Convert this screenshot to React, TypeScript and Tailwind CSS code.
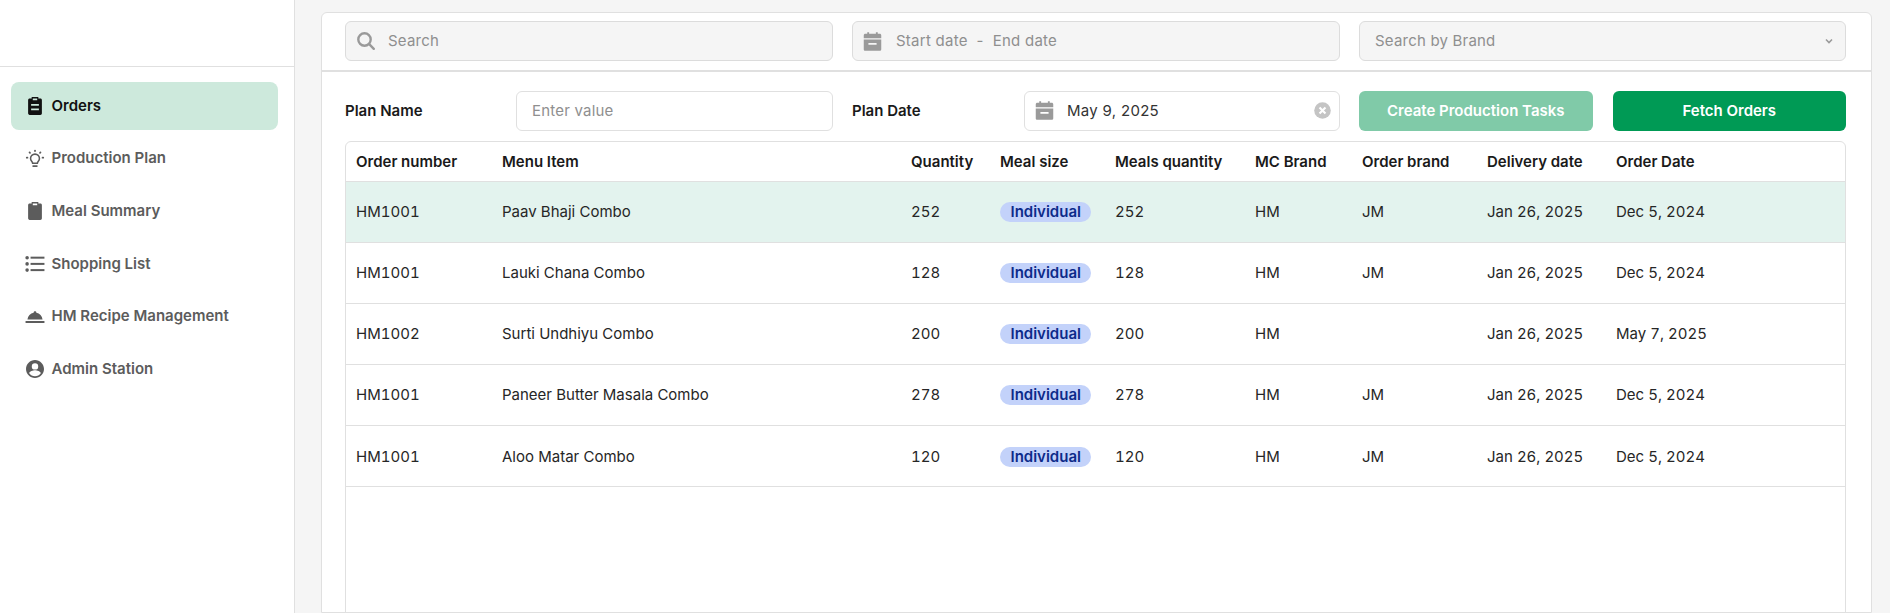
import React from "react";

const Clipboard = ({ lines }: { lines?: boolean }) => (
  <svg width="20" height="20" viewBox="0 0 18 18" fill="currentColor" fillRule="evenodd">
    <path
      d={
        "M6 1h6v1.2h1.8c.9 0 1.4.6 1.4 1.4v12c0 .9-.6 1.4-1.4 1.4H4.2c-.9 0-1.4-.6-1.4-1.4V3.6c0-.9.6-1.4 1.4-1.4H6zM7 2.3v1.6h4V2.3z" +
        (lines ? "M5.5 7.2h7v1.6h-7zM5.5 11.2h7v1.6h-7z" : "")
      }
    />
  </svg>
);
const Bulb = () => (
  <svg width="20" height="20" viewBox="0 0 18 18" fill="none" stroke="currentColor" strokeWidth="1.4" strokeLinecap="round">
    <path d="M6.9 12.8c0-1.3-1.9-2-1.9-4.2a4 4 0 0 1 8 0c0 2.2-1.9 2.9-1.9 4.2z" />
    <path d="M7.4 15.4h3.2" strokeWidth="1.7" />
    <path d="M9 1.4v.5M4.1 3l.4.4M13.9 3l-.4.4M1.6 7.8h.6M15.8 7.8h.6" strokeWidth="1.6" />
  </svg>
);
const ListIcon = () => (
  <svg width="20" height="20" viewBox="0 0 18 18" fill="currentColor">
    <circle cx="1.9" cy="3.3" r="1.6" />
    <circle cx="1.9" cy="8.9" r="1.6" />
    <circle cx="1.9" cy="14.5" r="1.6" />
    <rect x="5" y="2.4" width="12.5" height="1.8" />
    <rect x="5" y="8" width="12.5" height="1.8" />
    <rect x="5" y="13.6" width="12.5" height="1.8" />
  </svg>
);
const Bell = () => (
  <svg width="20" height="20" viewBox="0 0 18 18" fill="currentColor">
    <path d="M0.5 13.5h17v1.7H.5zM2.2 12.2c.4-3.4 2.6-5.6 5.6-6.2-.1-.8.4-1.3 1.2-1.3s1.3.5 1.2 1.3c3 .6 5.2 2.8 5.6 6.2z" />
  </svg>
);
const Account = () => (
  <svg width="18" height="18" viewBox="0 0 24 24" fill="currentColor">
    <path d="M12 0C5.4 0 0 5.4 0 12s5.4 12 12 12 12-5.4 12-12S18.6 0 12 0zm0 4.2a4.3 4.3 0 1 1 0 8.6 4.3 4.3 0 0 1 0-8.6zm0 17.4c-3.2 0-6-1.6-7.7-4 .1-2.6 5.1-3.9 7.7-3.9s7.6 1.3 7.7 3.9c-1.7 2.4-4.5 4-7.7 4z" />
  </svg>
);
const Calendar = () => (
  <svg width="21" height="21" viewBox="0 0 18 18" fill="currentColor" fillRule="evenodd">
    <path d="M4.5 1h1.6v1.4h5.8V1h1.6v1.4h1.6c.9 0 1.4.6 1.4 1.4v11.8c0 .9-.6 1.4-1.4 1.4H2.9c-.9 0-1.4-.6-1.4-1.4V3.8c0-.9.6-1.4 1.4-1.4h1.6zM1.5 6.2v1h15v-1zM5.5 10.3v1.5h7v-1.5z" />
  </svg>
);

const Nav = ({ icon, label, active }: { icon: React.ReactNode; label: string; active?: boolean }) => (
  <div
    className={
      "flex h-[48px] items-center gap-[6.5px] rounded-[8px] pl-[14px] text-[15px] font-semibold " +
      (active ? "bg-[#cde9dc] text-[#111111]" : "text-[#5c5c5c]")
    }
  >
    <span className="flex w-[20px] justify-center">{icon}</span>
    {label}
  </div>
);

const rows = [
  ["HM1001", "Paav Bhaji Combo", "252", "252", "HM", "JM", "Jan 26, 2025", "Dec 5, 2024"],
  ["HM1001", "Lauki Chana Combo", "128", "128", "HM", "JM", "Jan 26, 2025", "Dec 5, 2024"],
  ["HM1002", "Surti Undhiyu Combo", "200", "200", "HM", "", "Jan 26, 2025", "May 7, 2025"],
  ["HM1001", "Paneer Butter Masala Combo", "278", "278", "HM", "JM", "Jan 26, 2025", "Dec 5, 2024"],
  ["HM1001", "Aloo Matar Combo", "120", "120", "HM", "JM", "Jan 26, 2025", "Dec 5, 2024"],
];

const heads = ["Order number", "Menu Item", "Quantity", "Meal size", "Meals quantity", "MC Brand", "Order brand", "Delivery date", "Order Date"];
const colW = ["w-[146px]", "w-[409px]", "w-[89px]", "w-[115px]", "w-[140px]", "w-[107px]", "w-[125px]", "w-[129px]", ""];

export default function App() {
  return (
    <div className="flex h-screen overflow-hidden bg-[#f5f5f5] font-['Inter',sans-serif] text-[#1a1a1a]">
      <aside className="w-[295px] shrink-0 border-r border-[#e0e0e0] bg-white">
        <div className="h-[67px] border-b border-[#e0e0e0]" />
        <nav className="flex flex-col gap-[4.6px] pl-[11px] pr-[16px] pt-[15px]">
          <Nav active icon={<Clipboard lines />} label="Orders" />
          <Nav icon={<Bulb />} label="Production Plan" />
          <Nav icon={<Clipboard />} label="Meal Summary" />
          <Nav icon={<ListIcon />} label="Shopping List" />
          <Nav icon={<Bell />} label="HM Recipe Management" />
          <Nav icon={<Account />} label="Admin Station" />
        </nav>
      </aside>

      <main className="min-w-0 flex-1 pl-[26px] pr-[18px] pt-[11.5px]">
        <div className="h-full rounded-t-[6px] border border-[#e0e0e0] bg-white">
          <div className="grid h-[59px] grid-cols-[488px_488px_1fr] items-center gap-x-[19px] border-b-2 border-[#e0e0e0] pl-[23px] pr-[25px]">
            <div className="flex h-[39.5px] items-center gap-[12px] rounded-[6px] border border-[#dcdcdc] bg-[#f5f5f5] pl-[10px] text-[15px] tracking-[0.2px] text-[#8f8f8f]">
              <svg width="20" height="20" viewBox="0 0 20 20" fill="none" stroke="#9a9a9a" strokeWidth="2.4" strokeLinecap="round">
                <circle cx="8.5" cy="8.5" r="6.2" />
                <path d="M13.2 13.2l4.6 4.6" />
              </svg>
              Search
            </div>
            <div className="flex h-[39.5px] items-center gap-[13px] rounded-[6px] border border-[#dcdcdc] bg-[#f5f5f5] pl-[9px] text-[15px] tracking-[0.25px] text-[#8f8f8f]">
              <span className="text-[#9a9a9a]"><Calendar /></span>
              <span className="whitespace-pre">Start date  -  End date</span>
            </div>
            <div className="flex h-[39.5px] items-center justify-between rounded-[6px] border border-[#dcdcdc] bg-[#f5f5f5] pl-[15px] pr-[10px] text-[15px] tracking-[0.2px] text-[#8f8f8f]">
              Search by Brand
              <svg width="12" height="12" viewBox="0 0 12 12" fill="none" stroke="#9a9a9a" strokeWidth="1.6">
                <path d="M3 4.5l3 3 3-3" />
              </svg>
            </div>
          </div>

          <div className="pl-[23px] pr-[25px] pt-[19.5px]">
            <div className="grid grid-cols-[488px_488px_1fr] items-center gap-x-[19px]">
              <div className="flex items-center">
                <span className="w-[171px] shrink-0 text-[15px] font-semibold">Plan Name</span>
                <div className="flex h-[39.5px] flex-1 items-center rounded-[6px] border border-[#e0e0e0] bg-white pl-[15px] text-[15px] tracking-[0.2px] text-[#8f8f8f]">
                  Enter value
                </div>
              </div>
              <div className="flex items-center">
                <span className="w-[172px] shrink-0 text-[15px] font-semibold">Plan Date</span>
                <div className="flex h-[39.5px] flex-1 items-center justify-between rounded-[6px] border border-[#e0e0e0] bg-white pl-[9px] pr-[8px] text-[15px] tracking-[0.3px] text-[#333333]">
                  <span className="flex items-center gap-[12px]">
                    <span className="text-[#9a9a9a]"><Calendar /></span>
                    May 9, 2025
                  </span>
                  <svg width="17" height="17" viewBox="0 0 16 16">
                    <circle cx="8" cy="8" r="7.8" fill="#c4c4c4" />
                    <path d="M5.2 5.2l5.6 5.6M10.8 5.2l-5.6 5.6" stroke="#ffffff" strokeWidth="2" />
                  </svg>
                </div>
              </div>
              <div className="grid grid-cols-2 gap-x-[20px]">
                <button className="h-[39.5px] rounded-[6px] bg-[#80caa8] text-[15px] font-semibold text-white">Create Production Tasks</button>
                <button className="h-[39.5px] rounded-[6px] bg-[#009a55] text-[15px] font-semibold text-white">Fetch Orders</button>
              </div>
            </div>

            <div className="mt-[10.5px] h-[600px] rounded-t-[6px] border border-[#e0e0e0]">
              <table className="w-full table-fixed border-collapse text-left text-[15px]">
                <thead>
                  <tr className="h-[39px] border-b border-[#e0e0e0]">
                    {heads.map((h, i) => (
                      <th key={h} className={"pl-[10px] pt-[1px] font-semibold " + colW[i]}>{h}</th>
                    ))}
                  </tr>
                </thead>
                <tbody className="text-[#262626]">
                  {rows.map((r, i) => (
                    <tr key={i} className={"h-[61.2px] border-b border-[#e0e0e0] " + (i === 0 ? "bg-[#e3f3ee]" : "")}>
                      <td className="pl-[10px] pt-[1px] tabular-nums">{r[0]}</td>
                      <td className="pl-[10px] pt-[1px]">{r[1]}</td>
                      <td className="pl-[10px] pt-[1px] tabular-nums">{r[2]}</td>
                      <td className="pl-[10px] pt-[1px]">
                        <span className="inline-block rounded-full bg-[#c3d2fa] px-[10.5px] text-[15px] font-semibold leading-[20px] text-[#0d2a8a]">Individual</span>
                      </td>
                      <td className="pl-[10px] pt-[1px] tabular-nums">{r[3]}</td>
                      <td className="pl-[10px] pt-[1px]">{r[4]}</td>
                      <td className="pl-[10px] pt-[1px]">{r[5]}</td>
                      <td className="pl-[10px] pt-[1px] tabular-nums">{r[6]}</td>
                      <td className="pl-[10px] pt-[1px] tabular-nums">{r[7]}</td>
                    </tr>
                  ))}
                </tbody>
              </table>
            </div>
          </div>
        </div>
      </main>
    </div>
  );
}
